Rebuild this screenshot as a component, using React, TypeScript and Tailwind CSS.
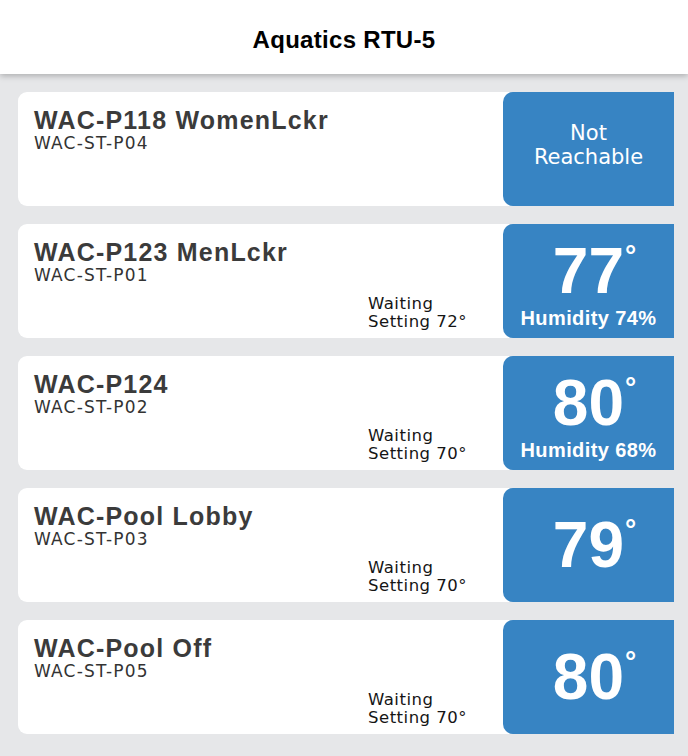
import React from "react";

type Unit = {
  name: string;
  code: string;
  reachable: boolean;
  temp?: number;
  setting?: number;
  humidity?: number;
};

const units: Unit[] = [
  { name: "WAC-P118 WomenLckr", code: "WAC-ST-P04", reachable: false },
  { name: "WAC-P123 MenLckr", code: "WAC-ST-P01", reachable: true, temp: 77, setting: 72, humidity: 74 },
  { name: "WAC-P124", code: "WAC-ST-P02", reachable: true, temp: 80, setting: 70, humidity: 68 },
  { name: "WAC-Pool Lobby", code: "WAC-ST-P03", reachable: true, temp: 79, setting: 70 },
  { name: "WAC-Pool Off", code: "WAC-ST-P05", reachable: true, temp: 80, setting: 70 },
];

function Card({ u }: { u: Unit }) {
  return (
    <div className="flex h-[114px] bg-white rounded-l-[9px]">
      <div className="flex-1 flex flex-col justify-between pl-[16px] pt-[14px] pb-[7px]">
        <div>
          <div className="font-['Liberation_Sans',Arial,sans-serif] font-bold text-[25px] leading-[28px] tracking-[1.2px] text-[#3b3b3b]">
            {u.name}
          </div>
          <div className="font-['DejaVu_Sans',sans-serif] text-[17px] leading-[18px] tracking-[1.2px] text-[#333333]">
            {u.code}
          </div>
        </div>
        {u.reachable && (
          <div className="pl-[334px] font-['DejaVu_Sans',sans-serif] text-[16.5px] leading-[18px] tracking-[0.5px] text-[#151515]">
            <div>Waiting</div>
            <div>Setting {u.setting}°</div>
          </div>
        )}
      </div>
      <div
        className={
          "w-[171px] bg-[#3784c3] rounded-l-[10px] flex flex-col items-center text-white " +
          (u.humidity !== undefined ? "justify-start pt-[15px]" : "justify-center")
        }
      >
        {!u.reachable ? (
          <div className="font-['DejaVu_Sans',sans-serif] text-[21px] leading-[24px] text-center mb-[8px]">
            <div>Not</div>
            <div>Reachable</div>
          </div>
        ) : (
          <>
            <div className="flex items-start pl-[12px] font-['Liberation_Sans',Arial,sans-serif] font-bold">
              <span className="text-[64px] leading-none">{u.temp}</span>
              <span className="text-[28px] leading-none ml-[1px] mt-[3px]">°</span>
            </div>
            {u.humidity !== undefined && (
              <div className="mt-[4px] font-['Liberation_Sans',Arial,sans-serif] font-bold text-[20px] leading-[22px] tracking-[0.4px]">
                Humidity {u.humidity}%
              </div>
            )}
          </>
        )}
      </div>
    </div>
  );
}

export default function App() {
  return (
    <div className="min-h-screen bg-[#e6e7e9]">
      <div className="relative z-10 h-[74px] bg-white flex items-center justify-center shadow-[0_2px_6px_rgba(0,0,0,0.25)]">
        <h1 className="font-['Liberation_Sans',Arial,sans-serif] font-bold text-[24px] tracking-[0.3px] text-black mt-[6px]">
          Aquatics RTU-5
        </h1>
      </div>
      <div className="flex flex-col gap-[18px] pt-[18px] pl-[18px] pr-[14px] pb-[22px]">
        {units.map((u) => (
          <Card key={u.code} u={u} />
        ))}
      </div>
    </div>
  );
}
